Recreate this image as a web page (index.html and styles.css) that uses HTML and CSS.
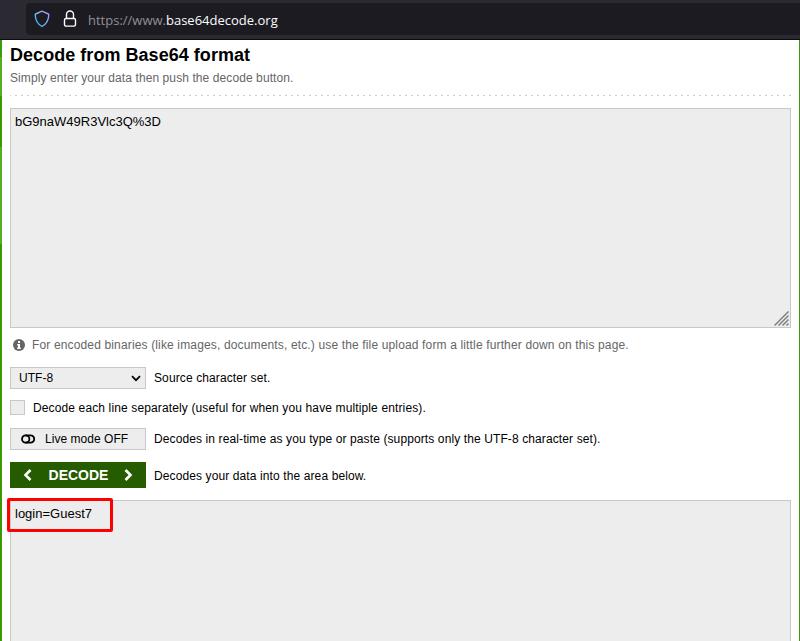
FILE: index.html
```html
<!DOCTYPE html>
<html lang="en">
<head>
<meta charset="utf-8">
<title>Base64 Decode</title>
<link rel="stylesheet" href="styles.css">
</head>
<body>
<header class="toolbar">
  <div class="urlbar">
    <svg class="shield" width="16" height="18" viewBox="0 0 16 18" fill="none">
      <defs><linearGradient id="g" x1="0" y1="1" x2="1" y2="0"><stop offset="0" stop-color="#20b8f0"/><stop offset=".5" stop-color="#78b8f0"/><stop offset="1" stop-color="#a58cf5"/></linearGradient></defs>
      <path d="M8 1.2 14.3 4Q14.9 4.3 14.8 5C14.5 10.200 12.300 14.200 8 16.500C3.700 14.200 1.500 10.200 1.200 5Q1.100 4.300 1.700 4Z" stroke="url(#g)" stroke-width="1.4" stroke-linejoin="round"/>
    </svg>
    <svg class="lock" width="14" height="18" viewBox="0 0 14 18" fill="none" stroke="#fbfbfe" stroke-width="1.400">
      <rect x="1.500" y="8.500" width="11" height="7.600" rx="1.500"/>
      <path d="M3.500 8.500V4.500a3.500 3.500 0 0 1 7 0v4"/>
    </svg>
    <span class="url">https://www.<b>base64decode.org</b></span>
  </div>
</header>
<main class="page">
  <h1>Decode from Base64 format</h1>
  <p class="lead">Simply enter your data then push the decode button.</p>
  <div class="rule"></div>
  <div class="area input">bG9naW49R3Vlc3Q%3D
    <svg class="grip" width="15" height="15" viewBox="0 0 15 15" stroke="#808080" stroke-width="1.500"><path d="M.5 14.500 14.500.5M4.500 14.500l10-10M8.500 14.500l6-6M12.500 14.500l2-2"/></svg>
  </div>
  <p class="note">
    <svg width="12" height="12" viewBox="0 0 12 12"><circle cx="6" cy="6" r="6" fill="#666"/><path d="M5 2h2v2H5zM4.200 5H7v3.500h.8V10H4.200V8.500H5v-2h-.8z" fill="#fff"/></svg>
    <span>For encoded binaries (like images, documents, etc.) use the file upload form a little further down on this page.</span>
  </p>
  <div class="row charset">
    <div class="control select"><span>UTF-8</span><svg width="10" height="7" viewBox="0 0 10 7" fill="none" stroke="#000" stroke-width="1.700"><path d="m1 1.200 4 4 4-4"/></svg></div>
    <span>Source character set.</span>
  </div>
  <div class="row lines"><i class="check"></i><span>Decode each line separately (useful for when you have multiple entries).</span></div>
  <div class="row live">
    <div class="control toggle"><svg width="14" height="10" viewBox="0 0 14 10" fill="none" stroke="#000" stroke-width="1.800"><path d="M4.500 1.300h5a3.700 3.700 0 0 1 0 7.400h-5"/><circle cx="4.700" cy="5" r="3.700"/></svg><span>Live mode OFF</span></div>
    <span>Decodes in real-time as you type or paste (supports only the UTF-8 character set).</span>
  </div>
  <div class="row decode">
    <div class="button"><svg width="9" height="12" viewBox="0 0 9 12" fill="none" stroke="#fff" stroke-width="2.600"><path d="M7.500 1 2.500 6l5 5"/></svg><b>DECODE</b><svg width="9" height="12" viewBox="0 0 9 12" fill="none" stroke="#fff" stroke-width="2.600"><path d="m1.500 1 5 5-5 5"/></svg></div>
    <span class="hint">Decodes your data into the area below.</span>
  </div>
  <div class="area output">login=Guest7<i class="highlight"></i></div>
</main>
</body>
</html>
```
FILE: styles.css
```css
* { box-sizing: border-box; }
body {
  margin: 0;
  height: 641px;
  overflow: hidden;
  display: flex;
  flex-direction: column;
  background: linear-gradient(#3f9a0a 0 17px, #57ad22 17px 56px, #3c9700 56px 107px, #57ad22 107px 204px, #3c9700 204px) 0 40px no-repeat;
  font: 12px/16px "Liberation Sans", Arial, sans-serif;
  color: #000;
}
h1, p { margin: 0; }
svg { display: block; flex: none; }
.toolbar {
  flex: none;
  height: 40px;
  padding: 3px 0 0 26px;
  background: #2b2a33;
  border-bottom: 1px solid #0c0c0d;
}
.urlbar {
  display: flex;
  align-items: center;
  height: 32px;
  padding-left: 8px;
  background: #1c1b22;
  border-radius: 4px 0 0 4px;
}
.lock { margin-left: 13px; }
.url {
  margin-left: 11px;
  padding-top: 2px;
  font: 13px/20px "Open Sans", "Noto Sans", sans-serif;
  color: #8f8f96;
  white-space: nowrap;
}
.url b { font-weight: 400; color: #fbfbfe; }
.page {
  flex: 1;
  min-height: 0;
  margin-left: 2px;
  padding: 0 8px;
  background: #fff;
  border-right: 1px solid #3f9413;
  overflow: hidden;
}
h1 { padding-top: 4px; font-size: 18px; line-height: 22px; letter-spacing: .04px; white-space: nowrap; }
.lead { padding-top: 4px; color: #666; letter-spacing: .09px; }
.rule {
  height: 1px;
  margin-top: 9px;
  background: repeating-linear-gradient(90deg, #ccc 0 1px, transparent 1px 5px, #ccc 5px 6px);
}
.area {
  position: relative;
  background: #ededed;
  border: 1px solid #c8c8c8;
  padding: 5px 4px;
  font-size: 13px;
}
.input { height: 220px; margin-top: 12px; }
.grip { position: absolute; right: 1px; bottom: 1px; }
.note {
  display: flex;
  align-items: center;
  gap: 7px;
  height: 16px;
  margin: 9px 0 0 3px;
  color: #666;
  letter-spacing: .147px;
  white-space: nowrap;
}
.row { display: flex; align-items: center; white-space: nowrap; letter-spacing: .11px; }
.control {
  display: flex;
  align-items: center;
  width: 136px;
  height: 22px;
  margin-right: 8px;
  background: #ededed;
  border: 1px solid #c8c8c8;
  letter-spacing: .04px;
}
.charset { margin-top: 14px; }
.select { justify-content: space-between; padding: 0 4px 0 8px; }
.lines { height: 15px; margin-top: 11px; letter-spacing: .13px; }
.check {
  width: 15px;
  height: 15px;
  margin-right: 8px;
  background: #ededed;
  border: 1px solid #c8c8c8;
}
.live { margin-top: 13px; }
.toggle { padding-left: 10px; gap: 10px; }
.decode { margin-top: 12px; }
.hint { padding-top: 2px; }
.button {
  display: flex;
  align-items: center;
  justify-content: space-between;
  width: 136px;
  height: 26px;
  margin-right: 8px;
  padding: 0 13px;
  background: #265c00;
  color: #fff;
  font-size: 14px;
  letter-spacing: 0;
}
.button b { margin-left: 1px; }
.output { height: 300px; margin-top: 12px; }
.highlight {
  position: absolute;
  left: -4px;
  top: -3px;
  width: 106px;
  height: 34px;
  border: 3px solid #f00;
  border-radius: 2px;
}
```
